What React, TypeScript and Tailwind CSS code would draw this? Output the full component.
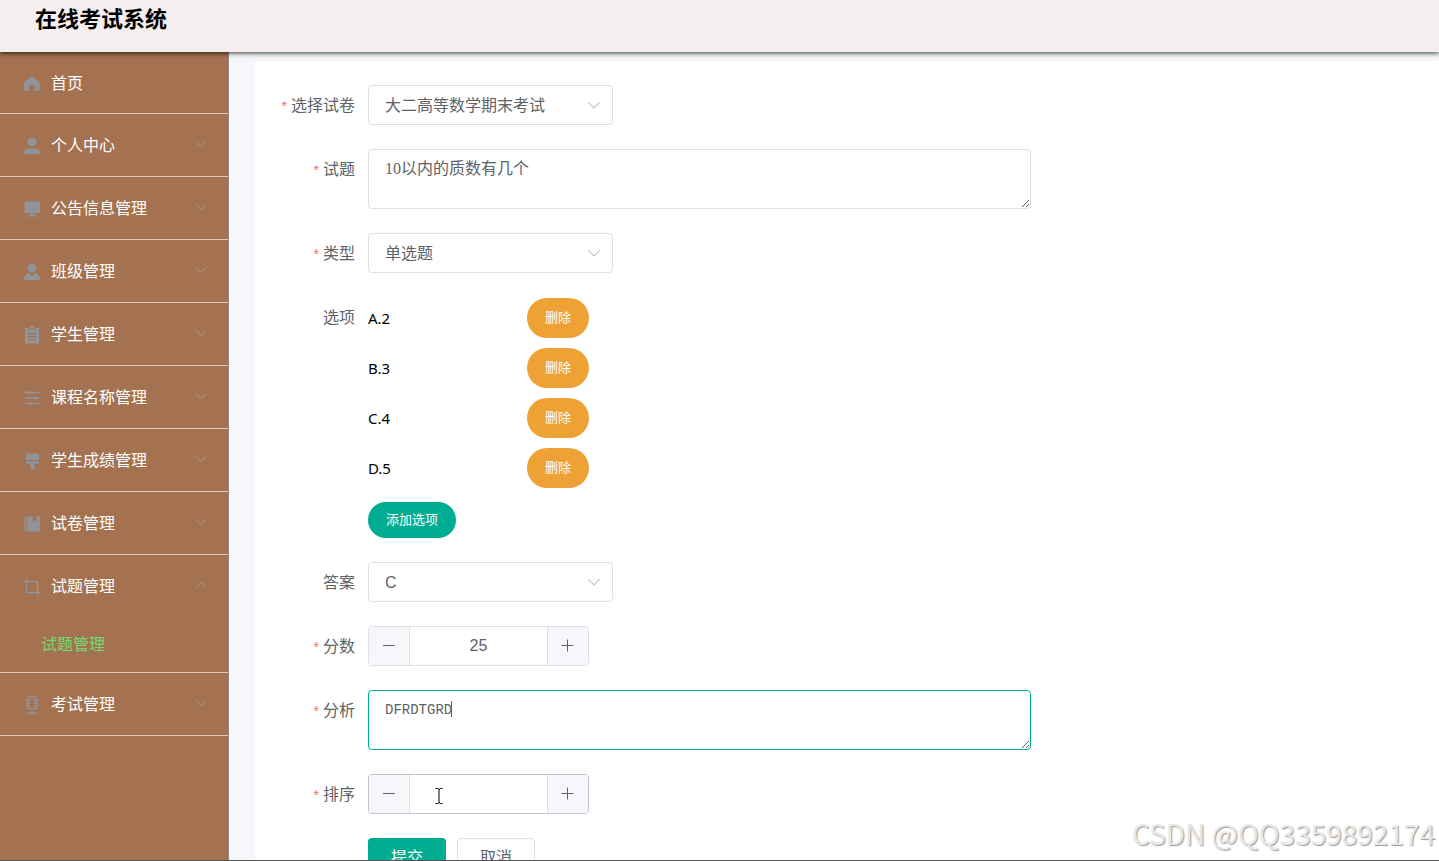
import React, { useState } from 'react';
import { clsx } from 'clsx';

const icons = {
  home: <path d="M9 1 1.2 7.200v8.800h5v-3.600a2.700 2.700 0 0 1 5.400 0v3.600h5V7.200z" />,
  user: (
    <>
      <circle cx="9" cy="5" r="4.500" />
      <path d="M1.200 17v-1.600a4 4 0 0 1 4-4h7.600a4 4 0 0 1 4 4V17z" />
    </>
  ),
  platform: <path d="M1.500 1.500h15.500v11.500h-6.600v2h3.200v1.500H4.700v-1.500h3.200v-2H1.500z" />,
  custom: (
    <>
      <circle cx="9" cy="5" r="4.400" />
      <path d="M.8 17c.2-3.600 2.100-6.300 5.200-7.600l3 3.600 3-3.600c3.100 1.300 5 4 5.200 7.600z" />
    </>
  ),
  order: (
    <path
      fillRule="evenodd"
      d="M2 2h3.800v1.400h6.400V2H16v15.500H2zM4.800 7v1.200h8.400V7zm0 3v1.200h8.400V10zm0 3v1.200h8.400V13zM6.800 .6h4.400v1.700H6.800z"
    />
  ),
  operation: (
    <path d="M1.500 2.700h2.900a1.900 1.900 0 0 1 3.200 0h9v1.500h-9a1.900 1.900 0 0 1-3.200 0H1.500zM1.500 8.200h9.400a1.900 1.900 0 0 1 3.200 0h2.500v1.500h-2.500a1.900 1.900 0 0 1-3.200 0H1.500zM1.500 13.700h5.400a1.900 1.900 0 0 1 3.200 0h6.500v1.500h-6.500a1.900 1.900 0 0 1-3.200 0H1.500z" />
  ),
  brush: <path d="M3 1.500h13V8H3zM3 9.200h13v1.600a1.200 1.200 0 0 1-1.200 1.200h-3.300v5.200h-4V12H4.200A1.200 1.200 0 0 1 3 10.800z" />,
  notebook: <path d="M1.500 1.500h1.700v15H1.500zM4.300 1.500h5.200v5l2-1.500 2 1.500v-5h3.500v15H4.300z" />,
  crop: (
    <path
      fill="none"
      stroke="currentColor"
      strokeWidth="1.400"
      d="M.8 3.500h13.700v14.300M3.500 .8v13.700h14.300"
    />
  ),
  microphone: (
    <path
      fill="none"
      stroke="currentColor"
      strokeWidth="1.300"
      d="M7 .7h4a2.800 2.800 0 0 1 2.800 2.800v6.700A2.800 2.800 0 0 1 11 13H7a2.800 2.800 0 0 1-2.800-2.800V3.500A2.800 2.800 0 0 1 7 .7zM9 13v4M3.800 17.200h10.400M4.200 4h3.300M10.500 4h3.300M4.200 7h3.300M10.500 7h3.300M4.200 10h3.300M10.500 10h3.300"
    />
  ),
};

type IconName = keyof typeof icons;

const menus: { title: string; icon: IconName; children?: string[]; open?: boolean }[] = [
  { title: '个人中心', icon: 'user' },
  { title: '公告信息管理', icon: 'platform' },
  { title: '班级管理', icon: 'custom' },
  { title: '学生管理', icon: 'order' },
  { title: '课程名称管理', icon: 'operation' },
  { title: '学生成绩管理', icon: 'brush' },
  { title: '试卷管理', icon: 'notebook' },
  { title: '试题管理', icon: 'crop', children: ['试题管理'], open: true },
  { title: '考试管理', icon: 'microphone' },
];

function MenuIcon({ name }: { name: IconName }) {
  return (
    <svg className="w-[18px] h-[18px] shrink-0 text-[#909399]" viewBox="0 0 18 18" fill="currentColor" aria-hidden="true">
      {icons[name]}
    </svg>
  );
}

function Chevron({ className }: { className?: string }) {
  return (
    <svg className={className} viewBox="0 0 12 12" fill="none" stroke="currentColor" aria-hidden="true">
      <path d="M1 3.500l5 5 5-5" />
    </svg>
  );
}

function Sidebar() {
  return (
    <nav className="w-[229px] shrink-0 bg-[#a47250] text-white border-r border-[#98887f]">
      <a href="#home" className="flex items-center gap-[10px] h-[62px] pt-[2px] pl-[23px] border-b border-[#d9cbc1]">
        <MenuIcon name="home" />
        首页
      </a>
      {menus.map((menu) => (
        <div key={menu.title} className="border-b border-[#d9cbc1]">
          <button type="button" aria-expanded={!!menu.open} className="flex items-center gap-[10px] w-full h-[62px] pt-[2px] pl-[23px] pr-[21px] text-left">
            <MenuIcon name={menu.icon} />
            <span className="grow">{menu.title}</span>
            <Chevron className={clsx('w-3 h-3 mb-1 text-[#a39b97]', menu.open && 'rotate-180')} />
          </button>
          {menu.children?.map((child) => (
            <a key={child} href="#questions" className="flex items-center h-[55px] pl-[41px] text-[#70dc70]">
              {child}
            </a>
          ))}
        </div>
      ))}
    </nav>
  );
}

function FormItem({ label, htmlFor, required, children }: {
  label: string;
  htmlFor?: string;
  required?: boolean;
  children: React.ReactNode;
}) {
  return (
    <div className="flex items-start gap-[13px]">
      <label htmlFor={htmlFor} className="w-[100px] shrink-0 pt-[2px] text-right leading-[38px] text-[#606266]">
        {required && <span className="mr-1 text-sm leading-none text-[#f56c6c]">*</span>}
        {label}
      </label>
      <div className="grow min-w-0">{children}</div>
    </div>
  );
}

function Select({ id, options }: { id: string; options: string[] }) {
  return (
    <div className="relative w-[245px]">
      <select id={id} className="block w-full h-10 pt-px pl-4 pr-9 rounded border border-[#dcdfe6] bg-white appearance-none text-[#606266] outline-none">
        {options.map((o) => (
          <option key={o}>{o}</option>
        ))}
      </select>
      <Chevron className="absolute right-3 top-[13px] w-[14px] h-[14px] text-[#c0c4cc] pointer-events-none" />
    </div>
  );
}

function NumberInput({ id, initial, active }: { id: string; initial: number | ''; active?: boolean }) {
  const [value, setValue] = useState<number | ''>(initial);
  const step = (n: number) => setValue(Math.max(0, Number(value) + n));

  return (
    <div className={clsx('relative flex w-[221px] h-10 rounded border overflow-hidden text-[#606266]', active ? 'border-[#c0c4cc]' : 'border-[#dcdfe6]')}>
      <button type="button" aria-label="减少" onClick={() => step(-1)} className="flex items-center justify-center w-[41px] shrink-0 bg-[#f5f7fa] border-r border-[#dcdfe6]">
        <svg className="w-[14px] h-[14px]" viewBox="0 0 14 14" stroke="currentColor">
          <path d="M1 6.500h12" />
        </svg>
      </button>
      <input id={id} inputMode="numeric" value={value} onChange={(e) => setValue(Number(e.target.value) || '')} className="grow min-w-0 text-center outline-none" />
      <button type="button" aria-label="增加" onClick={() => step(1)} className="flex items-center justify-center w-[41px] shrink-0 bg-[#f5f7fa] border-l border-[#dcdfe6]">
        <svg className="w-[14px] h-[14px]" viewBox="0 0 14 14" stroke="currentColor">
          <path d="M.5 6.500h12M6.500 .5v12" />
        </svg>
      </button>
      {active && (
        <svg className="absolute left-[66px] top-[13px] w-2 h-4 text-black pointer-events-none" viewBox="0 0 8 16" fill="none" stroke="currentColor" aria-hidden="true">
          <path d="M.5 .5h2.300L4 1.500 5.200.5h2.300M4 1.500v13M.5 15.500h2.300L4 14.500l1.200 1h2.300" />
        </svg>
      )}
    </div>
  );
}

function QuestionForm() {
  const [options, setOptions] = useState(['A.2', 'B.3', 'C.4', 'D.5']);

  return (
    <form className="flex flex-col gap-6" onSubmit={(e) => e.preventDefault()}>
      <FormItem label="选择试卷" htmlFor="paper" required>
        <Select id="paper" options={['大二高等数学期末考试']} />
      </FormItem>
      <FormItem label="试题" htmlFor="question" required>
        <textarea
          id="question"
          defaultValue="10以内的质数有几个"
          className="block w-full max-w-[663px] h-[60px] px-4 py-[7px] rounded border border-[#dcdfe6] bg-white text-[#606266] leading-6 outline-none resize font-['Liberation_Serif','Noto_Sans_CJK_SC',serif]"
        />
      </FormItem>
      <FormItem label="类型" htmlFor="type" required>
        <Select id="type" options={['单选题', '多选题', '判断题', '填空题']} />
      </FormItem>
      <FormItem label="选项">
        <ul className="flex flex-col gap-[10px] pt-px font-['Noto_Sans','Noto_Sans_CJK_SC',sans-serif] text-black">
          {options.map((option) => (
            <li key={option} className="flex items-center h-10">
              <span className="w-[159px] text-[15px]">{option}</span>
              <button
                type="button"
                onClick={() => setOptions(options.filter((o) => o !== option))}
                className="h-10 px-[18px] rounded-full bg-[#eea236] text-[13px] text-white"
              >
                删除
              </button>
            </li>
          ))}
        </ul>
        <button type="button" className="block h-9 mt-[14px] px-[18px] rounded-full bg-[#00ad93] text-[13px] text-white">
          添加选项
        </button>
      </FormItem>
      <FormItem label="答案" htmlFor="answer">
        <Select id="answer" options={['C', 'A', 'B', 'D']} />
      </FormItem>
      <FormItem label="分数" htmlFor="score" required>
        <NumberInput id="score" initial={25} />
      </FormItem>
      <FormItem label="分析" htmlFor="analysis" required>
        <div className="relative max-w-[663px]">
          <textarea
            id="analysis"
            defaultValue="DFRDTGRD"
            className="block w-full h-[60px] px-4 py-[7px] rounded border border-[#00ad93] bg-white text-sm text-[#606266] leading-6 outline-none resize font-['Liberation_Mono','Noto_Sans_CJK_SC',monospace]"
          />
          <span className="absolute left-[83px] top-[11px] w-px h-4 bg-[#606266]" />
        </div>
      </FormItem>
      <FormItem label="排序" htmlFor="sort" required>
        <NumberInput id="sort" initial="" active />
      </FormItem>
      <div className="flex gap-[11px] pl-[113px]">
        <button type="submit" className="h-10 px-[23px] rounded bg-[#00ad93] text-white">
          提交
        </button>
        <button type="button" className="h-10 px-[22px] rounded border border-[#dcdfe6] bg-white text-[#606266]">
          取消
        </button>
      </div>
    </form>
  );
}

export default function App() {
  return (
    <div className="relative flex flex-col h-screen overflow-hidden bg-[#f5f7fa] text-base font-['Liberation_Sans','Noto_Sans_CJK_SC',sans-serif]">
      <header className="relative z-10 h-[52px] shrink-0 px-[35px] bg-[#f4eeee] shadow-[0_1px_5px_rgba(0,0,0,0.8)]">
        <h1 className="text-[22px] leading-10 font-bold text-black">在线考试系统</h1>
      </header>
      <div className="flex grow min-h-0">
        <Sidebar />
        <main className="grow min-w-0 pt-[9px] pl-[26px]">
          <section className="min-h-full pt-6 bg-white">
            <QuestionForm />
          </section>
        </main>
      </div>
      <div className="absolute right-1 bottom-[6px] text-[28px] leading-[44px] text-[#e8e8e8] [text-shadow:1px_1px_1px_#999] font-['Noto_Sans_CJK_SC',sans-serif] pointer-events-none">
        CSDN @QQ3359892174
      </div>
      <div className="absolute inset-x-0 bottom-0 h-px bg-[#555]" />
    </div>
  );
}
